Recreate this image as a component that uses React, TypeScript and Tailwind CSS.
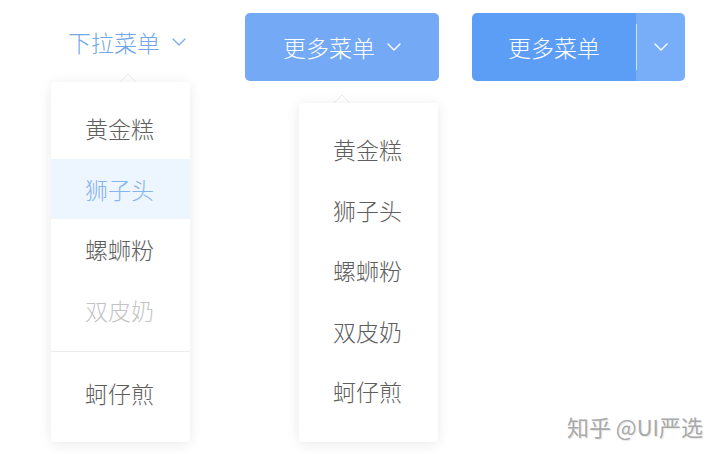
import React from "react";

const font = { fontFamily: '"Noto Sans CJK SC", "Noto Sans", sans-serif' };

function Chevron({ color, className }: { color: string; className?: string }) {
  return (
    <svg className={className} width="14" height="8" viewBox="0 0 14 8" fill="none">
      <path d="M1 1 L7 7 L13 1" stroke={color} strokeWidth="1.4" strokeLinecap="round" strokeLinejoin="round" />
    </svg>
  );
}

function Arrow({ className }: { className?: string }) {
  return (
    <svg className={className} width="18" height="10" viewBox="0 0 18 10" fill="none">
      <path d="M0 10 L9 1 L18 10 Z" fill="#ffffff" />
      <path d="M0 10 L9 1 L18 10" stroke="#ececec" strokeWidth="1" fill="none" />
    </svg>
  );
}

type Item = { label: string; state?: "hover" | "disabled"; divided?: boolean };

function Menu({ items, className }: { items: Item[]; className?: string }) {
  return (
    <div
      className={`absolute w-[139px] rounded-[4px] bg-white pt-[16px] shadow-[0_2px_14px_rgba(0,0,0,0.09)] ${className ?? ""}`}
    >
      {items.map((it) => (
        <React.Fragment key={it.label}>
          {it.divided && <div className="my-[11px] h-px bg-[#ececec]" />}
          <div
            className={`flex h-[60.5px] items-center pl-[34px] text-[23px] font-light ${
              it.state === "hover"
                ? "bg-[#edf5fe] text-[#86b4ec]"
                : it.state === "disabled"
                ? "text-[#c4c4c4]"
                : "text-[#5e5e5e]"
            }`}
          >
            {it.label}
          </div>
        </React.Fragment>
      ))}
    </div>
  );
}

export default function App() {
  return (
    <div className="relative h-[454px] w-[720px] overflow-hidden bg-white" style={font}>
      <div className="flex pl-[51px] pt-[13px]">
        {/* Column 1: text trigger */}
        <div className="relative h-[429px] w-[139px]">
          <div className="flex h-[58px] items-center pl-[17px] text-[23px] font-light text-[#74a7e8]">
            <span>下拉菜单</span>
            <Chevron color="#7eaee9" className="ml-[12px]" />
          </div>
          <Arrow className="absolute left-[68px] top-[60px]" />
          <Menu
            className="left-0 top-[69px] pb-[18px]"
            items={[
              { label: "黄金糕" },
              { label: "狮子头", state: "hover" },
              { label: "螺蛳粉" },
              { label: "双皮奶", state: "disabled" },
              { label: "蚵仔煎", divided: true },
            ]}
          />
        </div>

        {/* Column 2: button */}
        <div className="relative ml-[55px] w-[194px]">
          <button className="flex h-[68px] w-[194px] items-center justify-center rounded-[5px] bg-[#74aaf5] text-[23px] font-light text-white">
            <span>更多菜单</span>
            <Chevron color="#ffffff" className="ml-[12px]" />
          </button>
          <Arrow className="absolute left-[88px] top-[81px]" />
          <Menu
            className="left-[54px] top-[90px] pb-[20px]"
            items={[
              { label: "黄金糕" },
              { label: "狮子头" },
              { label: "螺蛳粉" },
              { label: "双皮奶" },
              { label: "蚵仔煎" },
            ]}
          />
        </div>

        {/* Column 3: split button */}
        <div className="ml-[33px] flex h-[68px] w-[213px] overflow-hidden rounded-[5px]">
          <button className="flex h-full w-[164px] items-center justify-center bg-[#5c9df6] text-[23px] font-light text-white">
            更多菜单
          </button>
          <div className="flex h-full items-center bg-[#78adf7]">
            <div className="h-[46px] w-px bg-[#cfe2fc]" />
            <div className="flex h-full w-[48px] items-center justify-center">
              <Chevron color="#ffffff" />
            </div>
          </div>
        </div>
      </div>

      <div
        className="absolute right-[17px] top-[410px] text-[22px] text-[#a9a9a9]"
        style={{ textShadow: "0 0 2px rgba(255,255,255,0.9), 1px 1px 1px rgba(0,0,0,0.12)" }}
      >
        知乎 @UI严选
      </div>
    </div>
  );
}
